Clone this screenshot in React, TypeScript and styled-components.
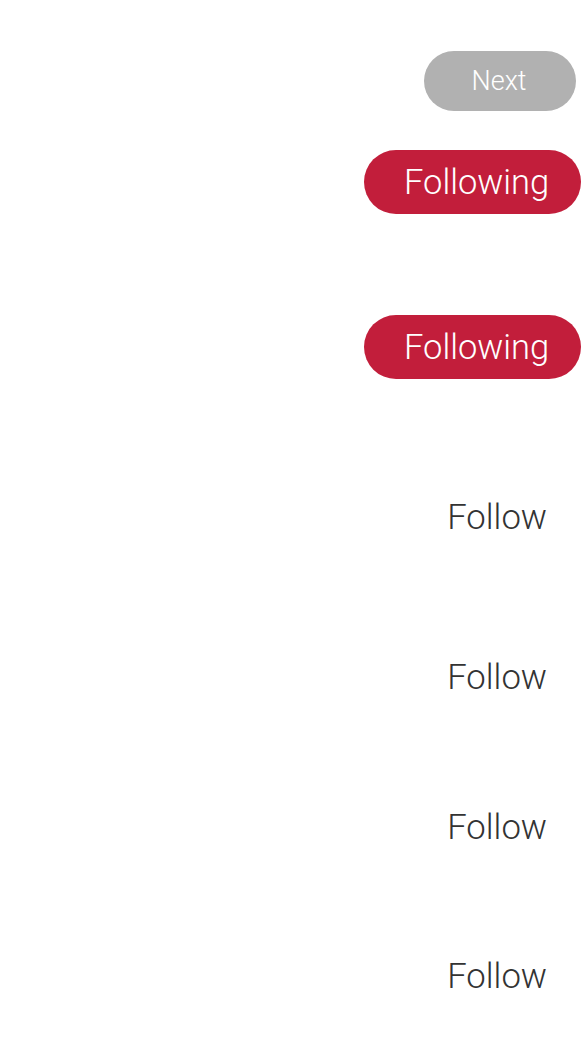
import React from "react";
import styled, { createGlobalStyle } from "styled-components";

const Global = createGlobalStyle`
  html, body { margin: 0; padding: 0; background: #ffffff; }
  body { font-family: Roboto, "Liberation Sans", Arial, sans-serif; }
`;

const Page = styled.div`
  width: 581px;
  min-height: 1043px;
  display: flex;
  flex-direction: column;
  align-items: flex-end;
  overflow: hidden;
`;

const Row = styled.div<{ $top: number; $right: number }>`
  margin-top: ${(p) => p.$top}px;
  margin-right: ${(p) => p.$right}px;
  display: flex;
  justify-content: flex-end;
`;

const NextButton = styled.button`
  width: 152px;
  height: 60px;
  border: none;
  border-radius: 30px;
  background: #b1b1b1;
  color: #ffffff;
  font-family: Roboto, "Liberation Sans", Arial, sans-serif;
  font-weight: 300;
  font-size: 27px;
  padding: 0 2px 0 0;
  display: flex;
  align-items: center;
  justify-content: center;
`;

const FollowingButton = styled.button`
  width: 217px;
  height: 64px;
  border: none;
  border-radius: 32px;
  background: #c21e3b;
  color: #ffffff;
  font-family: Roboto, "Liberation Sans", Arial, sans-serif;
  font-weight: 300;
  font-size: 34.5px;
  padding: 0 0 0 40px;
  display: flex;
  align-items: center;
  justify-content: flex-start;
`;

const FollowText = styled.span`
  display: block;
  height: 40px;
  line-height: 40px;
  font-family: Roboto, "Liberation Sans", Arial, sans-serif;
  font-weight: 300;
  font-size: 34.7px;
  color: #333333;
`;

type Item =
  | { kind: "next"; top: number }
  | { kind: "following"; top: number }
  | { kind: "follow"; top: number };

const items: Item[] = [
  { kind: "next", top: 51 },
  { kind: "following", top: 39 },
  { kind: "following", top: 101 },
  { kind: "follow", top: 118 },
  { kind: "follow", top: 120 },
  { kind: "follow", top: 110 },
  { kind: "follow", top: 109 },
];

export default function App() {
  return (
    <>
      <Global />
      <Page>
        {items.map((it, i) => {
          if (it.kind === "next")
            return (
              <Row key={i} $top={it.top} $right={5}>
                <NextButton>Next</NextButton>
              </Row>
            );
          if (it.kind === "following")
            return (
              <Row key={i} $top={it.top} $right={0}>
                <FollowingButton>Following</FollowingButton>
              </Row>
            );
          return (
            <Row key={i} $top={it.top} $right={34}>
              <FollowText>Follow</FollowText>
            </Row>
          );
        })}
      </Page>
    </>
  );
}
